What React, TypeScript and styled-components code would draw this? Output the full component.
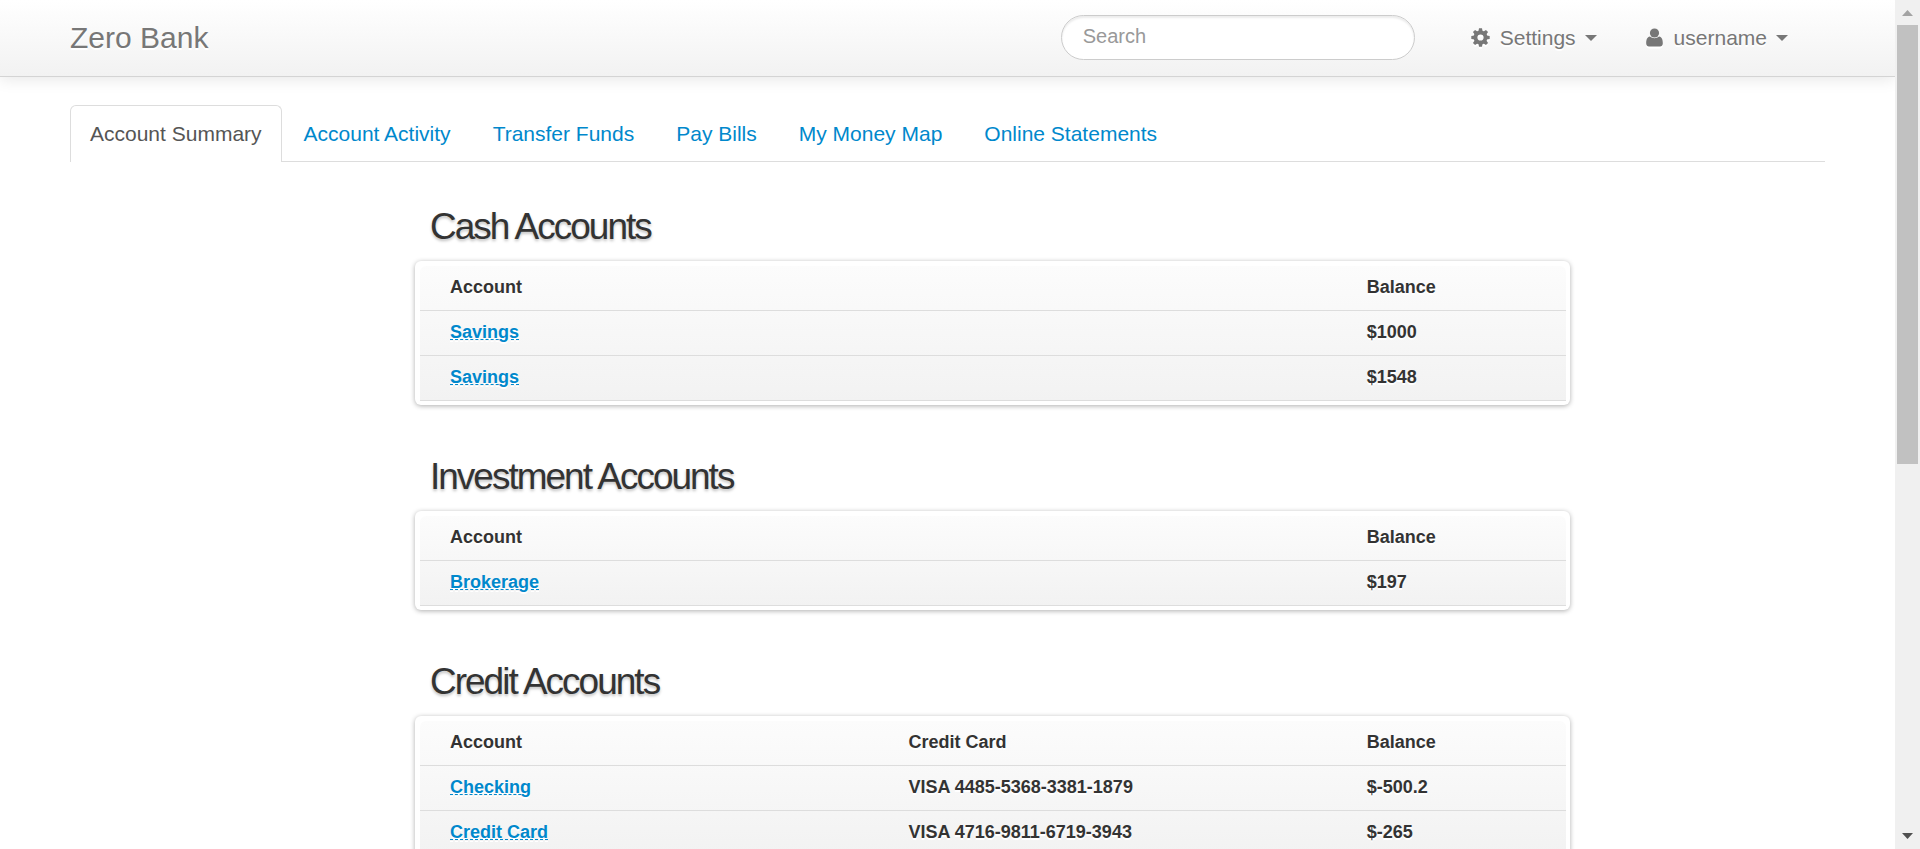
import React from "react";
import styled, { createGlobalStyle } from "styled-components";

const GlobalStyle = createGlobalStyle`
  *, *::before, *::after { box-sizing: border-box; }
  body {
    margin: 0;
    background: #fff;
    color: #333;
    font-family: "Liberation Sans", Arial, sans-serif;
  }
`;

const Shell = styled.div`
  display: flex;
  height: 100vh;
`;

const Page = styled.div`
  flex: 1;
  min-width: 0;
  overflow: hidden auto;
  scrollbar-width: none;
`;

const Container = styled.div`
  max-width: 1755px;
  margin: 0 auto;
`;

const Navbar = styled.header`
  background: linear-gradient(to bottom, #fff, #f2f2f2);
  border-bottom: 1px solid #d4d4d4;
  box-shadow: 0 2px 15px rgba(0, 0, 0, 0.1);
`;

const NavbarRow = styled(Container)`
  display: flex;
  align-items: center;
  height: 76px;
  padding: 0 15px 1px 0;
`;

const Brand = styled.a`
  margin-right: auto;
  color: #777;
  font-size: 30px;
  line-height: 36px;
  text-decoration: none;
  text-shadow: 0 2px 0 #fff;
`;

const SearchInput = styled.input`
  width: 354px;
  height: 45px;
  margin-right: 34px;
  padding: 0 21px 2px;
  border: 1px solid #ccc;
  border-radius: 23px;
  background: #fff;
  box-shadow: inset 0 2px 2px rgba(0, 0, 0, 0.08);
  color: #555;
  font: 20px "Liberation Sans", Arial, sans-serif;

  &::placeholder { color: #999; opacity: 1; }
`;

const Menus = styled.nav`
  display: flex;
  gap: 5px;
`;

const MenuButton = styled.button`
  display: flex;
  align-items: center;
  padding: 0 22px;
  border: 0;
  background: none;
  color: #777;
  font: 21px/28px "Liberation Sans", Arial, sans-serif;
  text-shadow: 0 2px 0 #fff;
  cursor: pointer;
`;

const Icon = styled.svg<{ $width: number }>`
  width: ${(p) => p.$width}px;
  height: 19px;
  margin-right: 10px;
  fill: currentColor;
  filter: drop-shadow(0 2px 0 #fff);
`;

const Caret = styled.span`
  margin-left: 9px;
  border: 6px solid transparent;
  border-top-color: currentColor;
  border-bottom: 0;
`;

const Tabs = styled.nav`
  display: flex;
  gap: 2px;
  margin-top: 28px;
  border-bottom: 1px solid #ddd;
`;

const Tab = styled.a<{ $active?: boolean }>`
  margin-bottom: -1px;
  padding: 14px 19px;
  border: 1px solid ${(p) => (p.$active ? "#ddd" : "transparent")};
  border-bottom: 0;
  border-radius: 6px 6px 0 0;
  background: ${(p) => (p.$active ? "#fff" : "transparent")};
  color: ${(p) => (p.$active ? "#555" : "#0088cc")};
  font-size: 21px;
  line-height: 28px;
  text-decoration: none;
`;

const Accounts = styled.main`
  display: flex;
  flex-direction: column;
  gap: 45px;
  padding: 38px 255px 45px 345px;
`;

const Heading = styled.h2`
  margin: 0 0 7px;
  padding-left: 15px;
  font-size: 37px;
  font-weight: normal;
  line-height: 54px;
  letter-spacing: -2px;
  text-shadow: 0 2px 3px rgba(0, 0, 0, 0.25);
`;

const Board = styled.div`
  padding: 5px 4px 4px 5px;
  border-radius: 6px;
  background: #fff;
  box-shadow: 0 1px 5px rgba(0, 0, 0, 0.32);
`;

const Table = styled.table`
  width: 100%;
  border-collapse: separate;
  border-spacing: 0;
  border-radius: 6px 6px 0 0;
  background: linear-gradient(to bottom, #fcfcfc, #f2f2f2);
  font-size: 18px;
  font-weight: bold;
  line-height: 26px;
  table-layout: fixed;
  text-align: left;
  text-shadow: 0 2px 0 #fff;

  th, td {
    padding: 8px 0 10px 30px;
    border-bottom: 1px solid #ddd;
  }
`;

const Column = styled.th<{ $share: number }>`
  width: ${(p) => p.$share}%;
`;

const AccountLink = styled.a`
  color: #0088cc;
  text-decoration: underline dashed 1px;
  text-underline-offset: 1px;
`;

const Scrollbar = styled.div`
  display: flex;
  flex-direction: column;
  width: 25px;
  padding: 0 2px;
  background: #f0f0f0;
`;

const Track = styled.div`
  flex: 1;
`;

const Thumb = styled.div`
  height: 55%;
  background: #c1c1c1;
`;

const Arrow = styled.svg<{ $color: string }>`
  width: 21px;
  height: 25px;
  fill: ${(p) => p.$color};
`;

const tabs = [
  "Account Summary",
  "Account Activity",
  "Transfer Funds",
  "Pay Bills",
  "My Money Map",
  "Online Statements",
];

interface Section {
  title: string;
  columns: { label: string; share: number }[];
  rows: string[][];
}

const sections: Section[] = [
  {
    title: "Cash Accounts",
    columns: [{ label: "Account", share: 80 }, { label: "Balance", share: 20 }],
    rows: [["Savings", "$1000"], ["Savings", "$1548"]],
  },
  {
    title: "Investment Accounts",
    columns: [{ label: "Account", share: 80 }, { label: "Balance", share: 20 }],
    rows: [["Brokerage", "$197"]],
  },
  {
    title: "Credit Accounts",
    columns: [
      { label: "Account", share: 40 },
      { label: "Credit Card", share: 40 },
      { label: "Balance", share: 20 },
    ],
    rows: [
      ["Checking", "VISA 4485-5368-3381-1879", "$-500.2"],
      ["Credit Card", "VISA 4716-9811-6719-3943", "$-265"],
    ],
  },
];

const CogIcon = () => (
  <Icon $width={19} viewBox="0 0 19 19" aria-hidden="true">
    <circle cx="9.5" cy="9.5" r="5" fill="none" stroke="currentColor" strokeWidth="3.8" />
    {[0, 45, 90, 135, 180, 225, 270, 315].map((angle) => (
      <path
        key={angle}
        d="M7.4 3.6L8 0.3H11L11.6 3.6Z"
        transform={`rotate(${angle} 9.5 9.5)`}
      />
    ))}
  </Icon>
);

const UserIcon = () => (
  <Icon $width={18} viewBox="0 0 18 19" aria-hidden="true">
    <circle cx="8.5" cy="5" r="4.6" />
    <path d="M4 8.6C1 9 .2 12 .2 15.500C.2 17.500 1.500 18.500 3 18.500H14C15.500 18.500 16.800 17.500 16.800 15.500C16.800 12 16 9 13 8.600C10.500 10.800 6.500 10.800 4 8.600Z" />
  </Icon>
);

export default function App() {
  return (
    <Shell>
      <GlobalStyle />
      <Page>
        <Navbar>
          <NavbarRow>
            <Brand href="#">Zero Bank</Brand>
            <SearchInput type="text" placeholder="Search" aria-label="Search" />
            <Menus>
              <MenuButton type="button">
                <CogIcon />
                Settings
                <Caret />
              </MenuButton>
              <MenuButton type="button">
                <UserIcon />
                username
                <Caret />
              </MenuButton>
            </Menus>
          </NavbarRow>
        </Navbar>
        <Container>
          <Tabs>
            {tabs.map((label, i) => (
              <Tab key={label} href="#" $active={i === 0}>
                {label}
              </Tab>
            ))}
          </Tabs>
          <Accounts>
            {sections.map((section) => (
              <section key={section.title}>
                <Heading>{section.title}</Heading>
                <Board>
                  <Table>
                    <thead>
                      <tr>
                        {section.columns.map((column) => (
                          <Column key={column.label} $share={column.share}>
                            {column.label}
                          </Column>
                        ))}
                      </tr>
                    </thead>
                    <tbody>
                      {section.rows.map((row, r) => (
                        <tr key={r}>
                          {row.map((cell, c) => (
                            <td key={c}>
                              {c === 0 ? <AccountLink href="#">{cell}</AccountLink> : cell}
                            </td>
                          ))}
                        </tr>
                      ))}
                    </tbody>
                  </Table>
                </Board>
              </section>
            ))}
          </Accounts>
        </Container>
      </Page>
      <Scrollbar aria-hidden="true">
        <Arrow $color="#a3a3a3" viewBox="0 0 21 25">
          <path d="M5 16L10.5 10L16 16Z" />
        </Arrow>
        <Track>
          <Thumb />
        </Track>
        <Arrow $color="#505050" viewBox="0 0 21 25">
          <path d="M5 9L10.5 15L16 9Z" />
        </Arrow>
      </Scrollbar>
    </Shell>
  );
}
